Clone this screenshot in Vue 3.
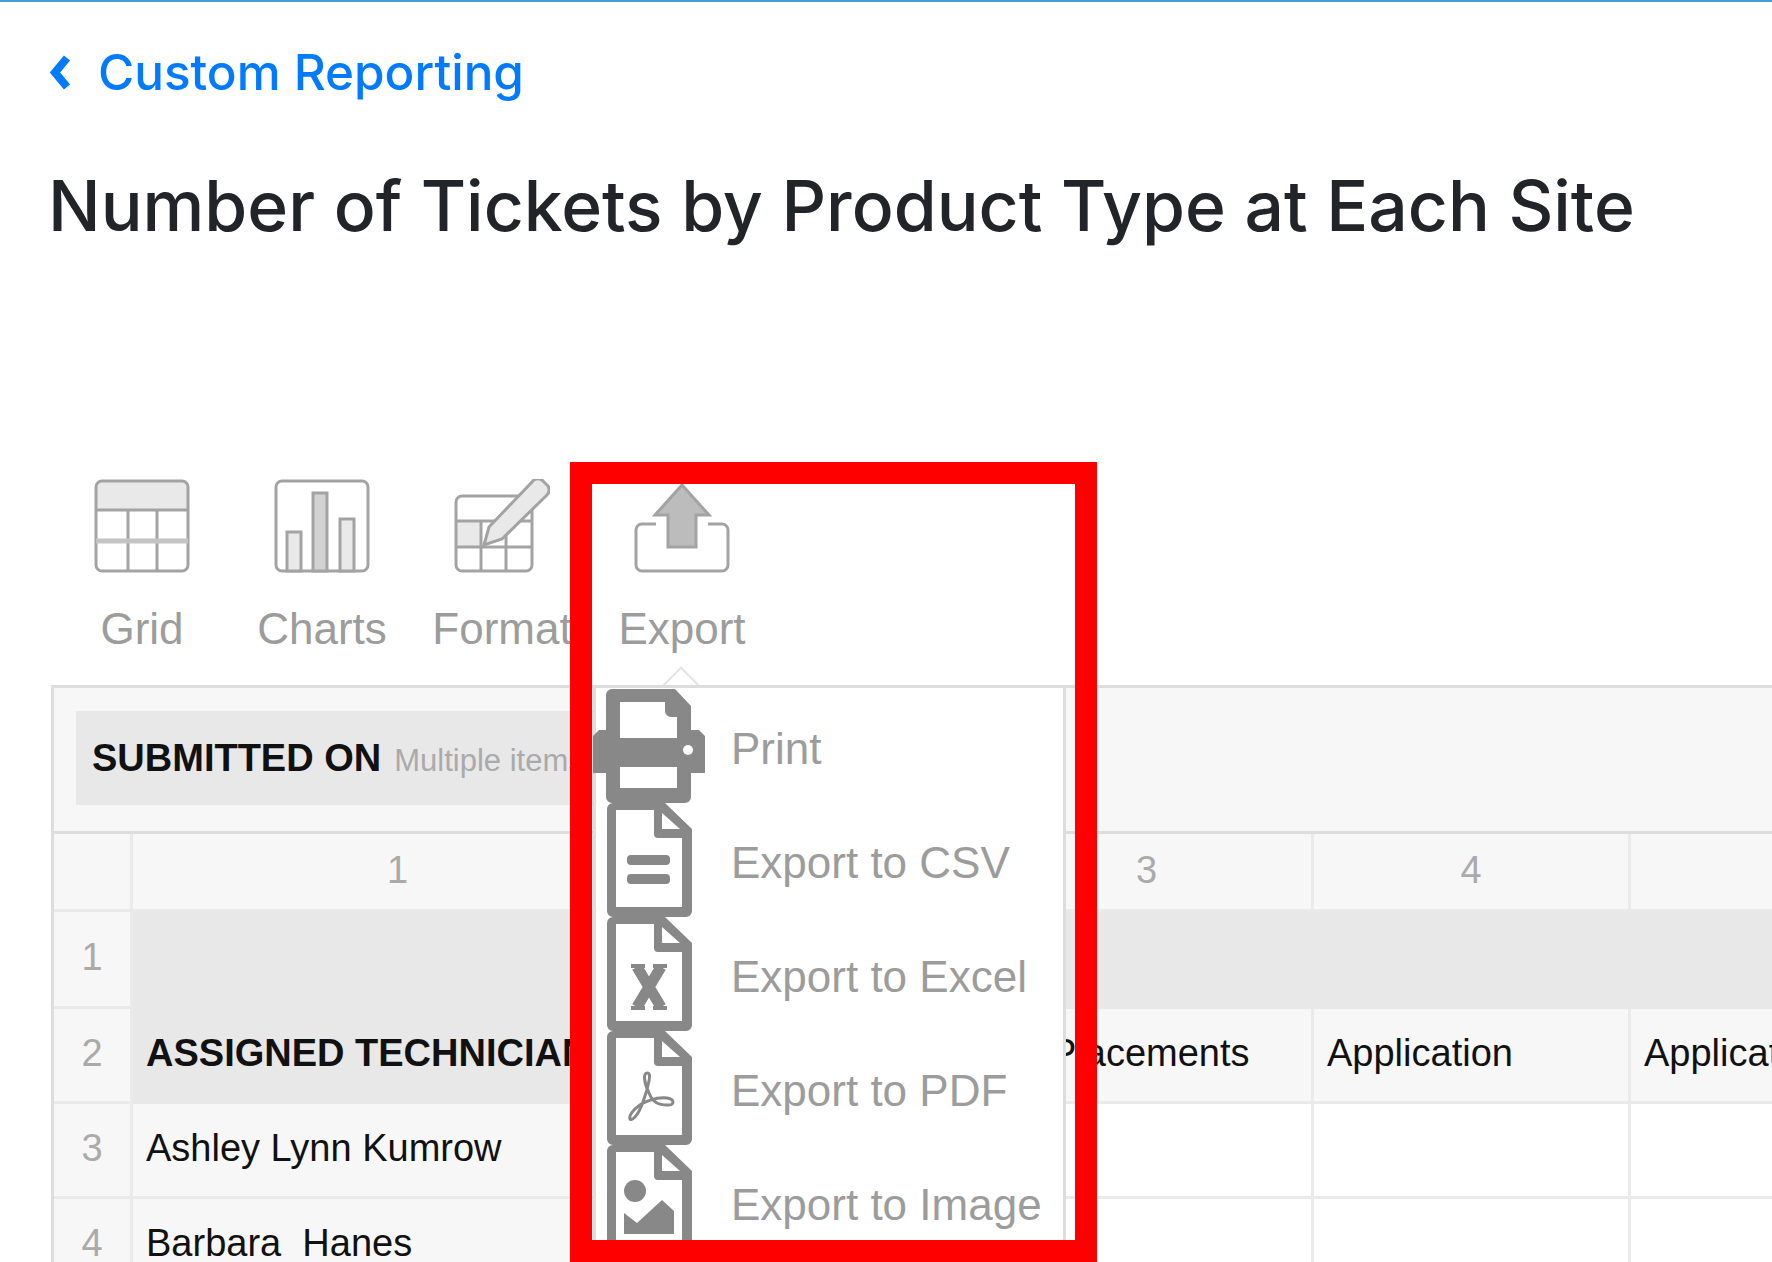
<script setup>
const rows = [
  { num: '1', kind: 'band', first: '', cells: [] },
  { num: '2', kind: 'head', first: 'ASSIGNED TECHNICIAN', cells: ['', 'Placements', 'Application', 'Application'] },
  { num: '3', kind: 'body', first: 'Ashley Lynn Kumrow', cells: ['', '', '', ''] },
  { num: '4', kind: 'body', first: 'Barbara  Hanes', cells: ['', '', '', ''] }
]
const docOutline = 'M6 0H58L85 26V108a6 6 0 0 1-6 6H6a6 6 0 0 1-6-6V6a6 6 0 0 1 6-6ZM9 7V104H75V35H51a4 4 0 0 1-4-4V7ZM55 10V26H73Z'
</script>

<template>
  <div class="page">
    <a class="back">
      <svg class="chevron" viewBox="0 0 22 37" aria-hidden="true"><path d="M17 4 5 18.5 17 33" /></svg>
      <span>Custom Reporting</span>
    </a>
    <h1 class="title">Number of Tickets by Product Type at Each Site</h1>

    <div class="toolbar">
      <div class="tool">
        <svg class="tool-icon" viewBox="0 0 96 94" aria-hidden="true">
          <path d="M2 31V8a6 6 0 0 1 6-6H88a6 6 0 0 1 6 6V31Z" class="soft" />
          <rect x="2" y="2" width="92" height="90" rx="6" class="line" />
          <path d="M2 31H94M34 31V92M63 31V92" class="line" />
          <path d="M2 62H94" class="line wide" />
        </svg>
        <span>Grid</span>
      </div>
      <div class="tool">
        <svg class="tool-icon" viewBox="0 0 96 94" aria-hidden="true">
          <rect x="2" y="2" width="92" height="90" rx="6" class="line" />
          <rect x="13" y="53" width="14" height="39" class="soft line" />
          <rect x="39" y="14" width="14" height="78" class="mid line" />
          <rect x="66" y="40" width="14" height="52" class="soft line" />
        </svg>
        <span>Charts</span>
      </div>
      <div class="tool">
        <svg class="tool-icon" viewBox="0 0 96 94" aria-hidden="true">
          <rect x="2" y="42" width="25" height="27" class="soft" />
          <rect x="2" y="17" width="76" height="75" rx="6" class="line" />
          <path d="M2 42H78M2 68H78M27 42V92M52 42V92" class="line" />
          <path d="M30 66 35 48 78 3a7 7 0 0 1 11-1l4 4a7 7 0 0 1 0 10L48 60Z" class="soft line" />
        </svg>
        <span>Format</span>
      </div>
      <div class="tool">
        <svg class="tool-icon" viewBox="0 0 96 94" aria-hidden="true">
          <path d="M22 45H8a6 6 0 0 0-6 6V86a6 6 0 0 0 6 6H88a6 6 0 0 0 6-6V51a6 6 0 0 0-6-6H74" class="line" />
          <path d="M48 6 75 36H62V68H34V36H21Z" class="dark" />
        </svg>
        <span>Export</span>
      </div>
    </div>

    <div class="panel">
      <div class="filters">
        <div class="filter">
          <strong>SUBMITTED ON</strong>
          <span>Multiple items</span>
        </div>
      </div>
      <div class="row col-heads">
        <div class="cell rownum"></div>
        <div class="cell c1 center">1</div>
        <div class="cell c2 center">2</div>
        <div class="cell c3 center">3</div>
        <div class="cell c4 center">4</div>
        <div class="cell c5 center">5</div>
      </div>
      <div v-for="r in rows" :key="r.num" class="row" :class="r.kind">
        <div class="cell rownum">{{ r.num }}</div>
        <template v-if="r.kind === 'band'">
          <div class="cell fill"></div>
        </template>
        <template v-else>
          <div class="cell c1 firstcol">{{ r.first }}</div>
          <div class="cell c2">{{ r.cells[0] }}</div>
          <div class="cell c3 placed">{{ r.cells[1] }}</div>
          <div class="cell c4">{{ r.cells[2] }}</div>
          <div class="cell c5">{{ r.cells[3] }}</div>
        </template>
      </div>
    </div>

    <div class="caret"></div>
    <div class="menu">
      <div class="item">
        <svg class="printer" viewBox="0 0 113 114" aria-hidden="true">
          <path fill-rule="evenodd" d="M19 0H82L98 17V41H106L112 47V84H98V108a6 6 0 0 1-6 6H19a6 6 0 0 1-6-6V84H0V47L6 41H13V6a6 6 0 0 1 6-6ZM27 13V49H84V28H78a6 6 0 0 1-6-6V13ZM27 78V99H84V78Z" />
          <circle cx="95" cy="61" r="5" class="hole" />
        </svg>
        <span>Print</span>
      </div>
      <div class="item">
        <svg class="doc" viewBox="0 0 85 114" aria-hidden="true">
          <path fill-rule="evenodd" :d="docOutline" />
          <rect x="20" y="52" width="43" height="10" rx="4" />
          <rect x="20" y="71" width="43" height="10" rx="4" />
        </svg>
        <span>Export to CSV</span>
      </div>
      <div class="item">
        <svg class="doc" viewBox="0 0 85 114" aria-hidden="true">
          <path fill-rule="evenodd" :d="docOutline" />
          <path d="M30 50 54 90M54 50 30 90" class="ex" />
          <path d="M24 49H38M46 49H60M24 91H38M46 91H60" class="ex-foot" />
        </svg>
        <span>Export to Excel</span>
      </div>
      <div class="item">
        <svg class="doc" viewBox="0 0 85 114" aria-hidden="true">
          <path fill-rule="evenodd" :d="docOutline" />
          <path d="M40 42C36 42 37 52 42 62 46 72 52 74 60 74 68 75 68 68 60 67 50 66 36 70 28 78 20 86 22 92 28 86 34 80 40 60 42 50 43 45 43 42 40 42Z" class="swoosh" />
        </svg>
        <span>Export to PDF</span>
      </div>
      <div class="item">
        <svg class="doc" viewBox="0 0 85 114" aria-hidden="true">
          <path fill-rule="evenodd" :d="docOutline" />
          <circle cx="28" cy="46" r="11" />
          <path d="M17 68 30 78 55 55 67 66V89H17Z" />
        </svg>
        <span>Export to Image</span>
      </div>
    </div>

    <div class="highlight"></div>
  </div>
</template>

<style scoped>
.page {
  position: relative;
  width: 1772px;
  height: 1262px;
  overflow: hidden;
  box-sizing: border-box;
  background: #fff;
  border-top: 2px solid #4a9bd4;
  font-family: "Liberation Sans", Arial, sans-serif;
}
.back {
  display: flex;
  align-items: center;
  gap: 26px;
  margin: 42px 0 0 50px;
  height: 56px;
  color: #007bff;
  font-family: Inter, sans-serif;
  font-weight: 500;
  font-size: 49.4px;
}
.chevron {
  width: 22px;
  height: 37px;
  fill: none;
  stroke: #007bff;
  stroke-width: 8;
}
.title {
  margin: 65px 0 0 48px;
  font-family: Inter, sans-serif;
  font-weight: 500;
  font-size: 69.6px;
  line-height: 82px;
  color: #212529;
}
.toolbar {
  display: flex;
  margin: 232px 0 0 52px;
}
.tool {
  width: 180px;
  flex: none;
  display: flex;
  flex-direction: column;
  align-items: center;
  gap: 31px;
  font-size: 44px;
  line-height: 50px;
  color: #9c9c9c;
}
.tool-icon {
  width: 96px;
  height: 94px;
}
.line {
  fill: none;
  stroke: #a3a3a3;
  stroke-width: 3;
}
.wide {
  stroke-width: 5;
  stroke: #c4c4c4;
}
.soft { fill: #e9e9e9; }
.mid { fill: #d2d2d2; }
.dark {
  fill: #bcbcbc;
  stroke: #a3a3a3;
  stroke-width: 3;
}
.panel {
  margin: 31px 0 0 51px;
  width: 1800px;
  border-top: 3px solid #ddd;
  border-left: 3px solid #ddd;
  background: #f7f7f7;
  font-size: 38px;
  color: #111;
}
.filters {
  height: 146px;
  box-sizing: border-box;
  padding: 23px 0 0 22px;
  border-bottom: 3px solid #ddd;
}
.filter {
  width: 540px;
  height: 94px;
  padding: 0 16px;
  display: flex;
  align-items: center;
  gap: 13px;
  white-space: nowrap;
  background: #e8e8e8;
}
.filter span {
  font-size: 31px;
  color: #aaa;
  padding-top: 5px;
}
.row {
  display: flex;
  height: 95px;
}
.col-heads {
  height: 78px;
  color: #aaa;
}
.band { height: 97px; }
.cell {
  box-sizing: border-box;
  flex: none;
  display: flex;
  align-items: center;
  white-space: pre;
  border-right: 3px solid #eaeaea;
  border-bottom: 3px solid #eaeaea;
  padding: 0 0 3px 13px;
}
.center {
  justify-content: center;
  padding-left: 0;
}
.rownum {
  width: 79px;
  padding-left: 0;
  justify-content: center;
  color: #aaa;
  background: #f7f7f7;
}
.c1 { width: 532px; }
.c2 { width: 317px; }
.c3 { width: 332px; }
.c4 { width: 317px; }
.c5 { width: 317px; }
.cell.fill {
  flex: 1;
  background: #e8e8e8;
  border-color: #e8e8e8;
}
.head .firstcol {
  background: #e8e8e8;
  border-color: #e8e8e8;
  font-weight: 700;
}
.placed { padding-left: 69px; }
.body .cell:not(.rownum):not(.firstcol) { background: #fff; }
.caret {
  position: absolute;
  left: 665px;
  top: 671px;
  width: 32px;
  height: 32px;
  box-sizing: border-box;
  background: #fff;
  border-top: 2px solid #e4e4e4;
  border-left: 2px solid #e4e4e4;
  transform: rotate(45deg);
}
.menu {
  position: absolute;
  left: 593px;
  top: 683px;
  width: 473px;
  height: 600px;
  box-sizing: border-box;
  padding-top: 1px;
  background: #fff;
  border-top: 3px solid #ddd;
  border-right: 3px solid #ddd;
  border-left: 3px solid #ddd;
}
.item {
  height: 114px;
  flex-shrink: 0;
  display: flex;
  align-items: center;
  font-size: 44px;
  color: #9c9c9c;
}
.item span {
  position: relative;
  top: 3px;
  margin-left: 25px;
}
.item svg { fill: #888; }
.printer {
  width: 113px;
  height: 114px;
  margin-left: -3px;
  position: relative;
}
.doc {
  width: 85px;
  height: 114px;
  margin: 0 14px 0 11px;
}
.hole { fill: #fff; }
.item .ex {
  fill: none;
  stroke: #888;
  stroke-width: 11;
}
.item .ex-foot {
  fill: none;
  stroke: #888;
  stroke-width: 4;
}
.item .swoosh {
  fill: none;
  stroke: #888;
  stroke-width: 3;
}
.highlight {
  position: absolute;
  left: 570px;
  top: 460px;
  width: 527px;
  height: 800px;
  box-sizing: border-box;
  border: 22px solid #f00;
  pointer-events: none;
}
</style>
